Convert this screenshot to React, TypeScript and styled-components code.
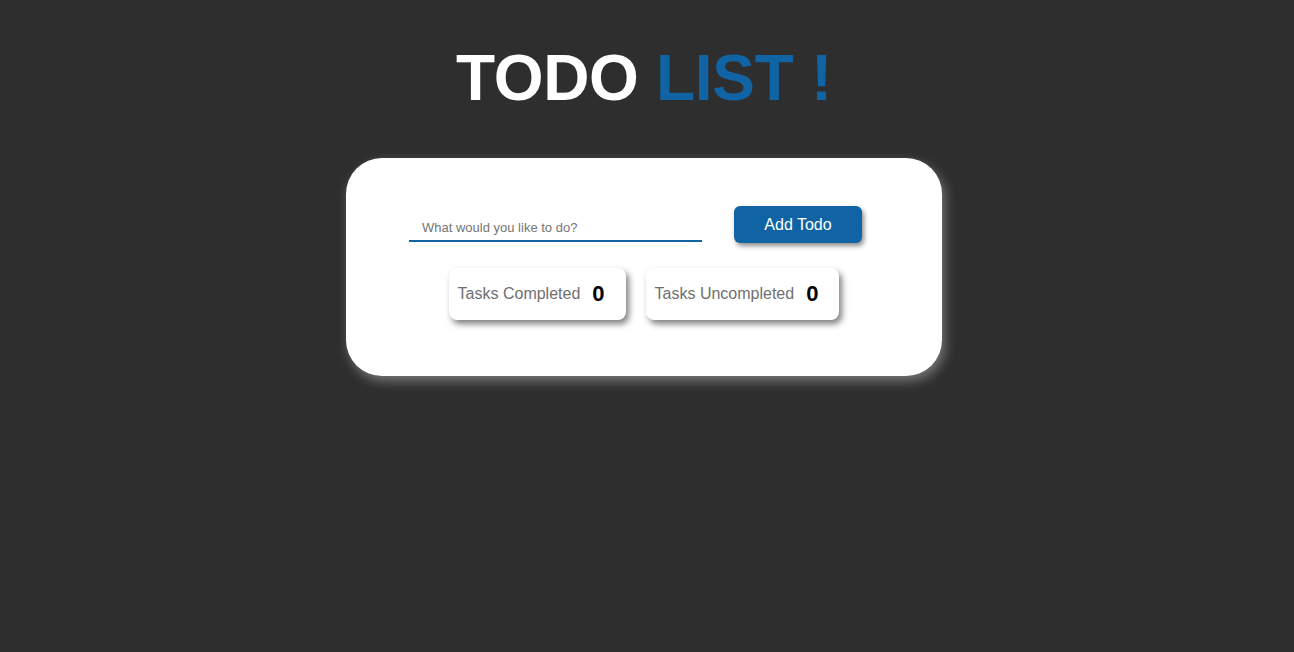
import React from "react";
import styled, { createGlobalStyle } from "styled-components";

const Global = createGlobalStyle`
  html, body {
    margin: 0;
    padding: 0;
    background: #2e2e2e;
    font-family: "Liberation Sans", Arial, sans-serif;
  }
  #root {
    min-height: 652px;
  }
`;

const Page = styled.main`
  display: flex;
  flex-direction: column;
  align-items: center;
  padding-top: 38px;
  padding-right: 6px;
`;

const Title = styled.h1`
  margin: 0;
  font-size: 64px;
  line-height: 80px;
  font-weight: 700;
  color: #ffffff;
  letter-spacing: -0.3px;
`;

const Accent = styled.span`
  color: #1064a3;
`;

const Card = styled.section`
  margin-top: 40px;
  width: 596px;
  box-sizing: border-box;
  background: #ffffff;
  border-radius: 36px;
  padding: 48px 0 56px;
  box-shadow: 3px 5px 12px rgba(255, 255, 255, 0.35);
  display: flex;
  flex-direction: column;
  align-items: center;
`;

const Form = styled.form`
  display: flex;
  align-items: flex-end;
  justify-content: center;
  gap: 32px;
  padding-right: 17px;
`;

const Input = styled.input`
  width: 293px;
  height: 31px;
  box-sizing: border-box;
  border: none;
  border-bottom: 2px solid #0f65a5;
  outline: none;
  padding: 4px 0 0 13px;
  margin-bottom: 1px;
  font-family: "Liberation Sans", Arial, sans-serif;
  font-size: 13px;
  color: #333;
  background: transparent;
  &::placeholder {
    color: #757575;
  }
`;

const Button = styled.button`
  width: 128px;
  height: 37px;
  border: none;
  border-radius: 6px;
  background: #1064a3;
  color: #ffffff;
  font-family: "Liberation Sans", Arial, sans-serif;
  font-size: 16px;
  box-shadow: 2px 3px 5px rgba(0, 0, 0, 0.45);
  cursor: pointer;
`;

const Stats = styled.div`
  display: flex;
  gap: 20px;
  margin-top: 25px;
`;

const StatBox = styled.div`
  height: 52px;
  box-sizing: border-box;
  display: flex;
  align-items: center;
  gap: 12px;
  padding: 0 21px 0 9px;
  background: #ffffff;
  border-radius: 8px;
  box-shadow: 3px 4px 6px rgba(0, 0, 0, 0.5);
`;

const StatLabel = styled.span`
  font-size: 16px;
  color: #6f6f6f;
`;

const StatValue = styled.span`
  font-size: 22px;
  font-weight: 700;
  color: #000000;
`;

export default function App() {
  return (
    <>
      <Global />
      <Page>
        <Title>
          TODO <Accent>LIST !</Accent>
        </Title>
        <Card>
          <Form onSubmit={(e) => e.preventDefault()}>
            <Input placeholder="What would you like to do?" />
            <Button type="submit">Add Todo</Button>
          </Form>
          <Stats>
            <StatBox>
              <StatLabel>Tasks Completed</StatLabel>
              <StatValue>0</StatValue>
            </StatBox>
            <StatBox>
              <StatLabel>Tasks Uncompleted</StatLabel>
              <StatValue>0</StatValue>
            </StatBox>
          </Stats>
        </Card>
      </Page>
    </>
  );
}
